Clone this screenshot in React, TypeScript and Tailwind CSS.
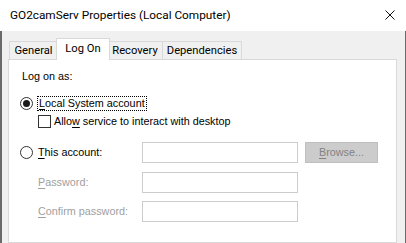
import React from "react";

const ui = { fontFamily: 'Roboto, "Noto Sans", sans-serif' };
const dlg = { fontFamily: '"Liberation Sans", Arial, sans-serif' };

function Tab({ label, width, active }: { label: string; width: string; active?: boolean }) {
  if (active) {
    return (
      <div
        className={`relative z-10 -mx-[2px] -mb-px flex h-[22px] items-start justify-center border border-b-0 border-[#d9d9d9] bg-white pt-[2px] text-[11.2px] text-black ${width}`}
      >
        {label}
      </div>
    );
  }
  return (
    <div
      className={`flex h-[18px] items-center justify-center border border-b-0 border-[#d9d9d9] bg-[#f0f0f0] pt-[1px] text-[11.2px] text-black -ml-px first:ml-0 ${width}`}
    >
      {label}
    </div>
  );
}

function Radio({ checked }: { checked?: boolean }) {
  return (
    <span className="flex h-[13px] w-[13px] shrink-0 items-center justify-center rounded-full border border-[#333333] bg-white">
      {checked && <span className="h-[7px] w-[7px] rounded-full bg-[#1a1a1a]" />}
    </span>
  );
}

function Field() {
  return <div className="h-[21px] w-[156px] border border-[#cccccc] bg-white" />;
}

export default function App() {
  return (
    <div className="flex h-[243px] w-[406px] flex-col overflow-hidden bg-white" style={ui}>
      {/* title bar */}
      <div className="flex h-[31px] shrink-0 items-center justify-between pl-[10px] pr-[11px]">
        <span className="text-[11.8px] text-black">GO2camServ Properties (Local Computer)</span>
        <svg width="10" height="10" viewBox="0 0 10 10" className="mt-[-1px]">
          <path d="M0.5 0.5 L9.5 9.5 M9.5 0.5 L0.5 9.5" stroke="#111" strokeWidth="1" />
        </svg>
      </div>

      {/* body */}
      <div className="flex flex-1 flex-col border-l-2 border-r border-l-[#6b6b6b] border-r-[#6b6b6b] bg-[#f0f0f0] pl-[6px] pr-[8px] pt-[7px]">
        <div className="flex h-[21px] items-end pl-[1px]">
          <Tab label="General" width="w-[49px]" />
          <Tab label="Log On" width="w-[54px]" active />
          <Tab label="Recovery" width="w-[56px]" />
          <Tab label="Dependencies" width="w-[80px]" />
        </div>

        <div className="flex-1 border border-[#d9d9d9] bg-white pl-[13px] pt-[10px] text-[10.8px] leading-[13px] text-black" style={dlg}>
          <div>Log on as:</div>

          <div className="mt-[13px] flex h-[15px] items-center">
            <span className="ml-[-2px]">
              <Radio checked />
            </span>
            <span className="ml-[4px] border border-dotted border-black px-[1px] leading-[13px]">
              <u className="underline-offset-2">L</u>ocal System account
            </span>
          </div>

          <div className="mt-[4px] flex h-[13px] items-center pl-[16px]">
            <span className="h-[13px] w-[13px] border border-[#333333] bg-white" />
            <span className="ml-[3px]">
              Allo<u className="underline-offset-2">w</u> service to interact with desktop
            </span>
          </div>

          <div className="mt-[14px] flex items-center">
            <span className="ml-[-2px]">
              <Radio />
            </span>
            <span className="ml-[5px] w-[104px]">
              <u className="underline-offset-2">T</u>his account:
            </span>
            <Field />
            <div className="ml-[7px] flex h-[21px] w-[73px] items-center justify-center border border-[#bfbfbf] bg-[#cccccc] text-[#838383]">
              <span>
                <u className="underline-offset-2">B</u>rowse...
              </span>
            </div>
          </div>

          <div className="mt-[9px] flex items-center pl-[16px] text-[#a0a0a0]">
            <span className="w-[104px]">
              <u className="underline-offset-2">P</u>assword:
            </span>
            <Field />
          </div>

          <div className="mt-[8px] flex items-center pl-[16px] text-[#a0a0a0]">
            <span className="w-[104px]">
              <u className="underline-offset-2">C</u>onfirm password:
            </span>
            <Field />
          </div>
        </div>
      </div>
    </div>
  );
}
